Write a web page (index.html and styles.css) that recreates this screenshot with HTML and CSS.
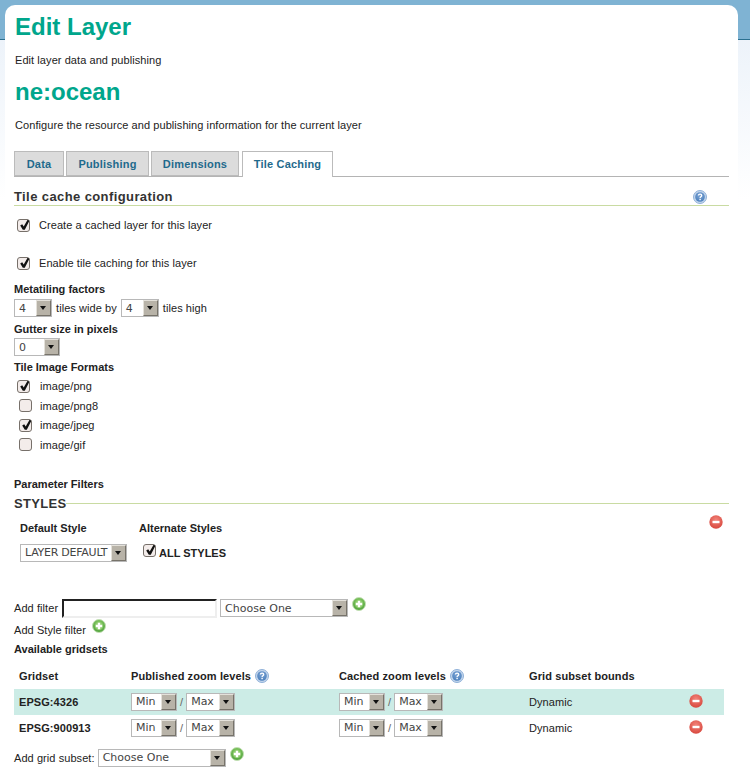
FILE: index.html
```html
<!DOCTYPE html>
<html>
<head>
<meta charset="utf-8">
<title>Edit Layer</title>
<link rel="stylesheet" href="styles.css">
</head>
<body>
<svg class="defs" width="0" height="0">
  <defs>
    <radialGradient id="gh" cx="50%" cy="35%" r="65%"><stop offset="0" stop-color="#7fa6d6"/><stop offset="1" stop-color="#4a7fbc"/></radialGradient>
    <radialGradient id="gp" cx="50%" cy="35%" r="65%"><stop offset="0" stop-color="#8fd06a"/><stop offset="1" stop-color="#4ea23c"/></radialGradient>
    <radialGradient id="gm" cx="50%" cy="35%" r="65%"><stop offset="0" stop-color="#f2847a"/><stop offset="1" stop-color="#d8483e"/></radialGradient>
    <symbol id="help" viewBox="0 0 14 14"><circle cx="7" cy="7" r="6.5" fill="#c4d6ec" stroke="#8fb0d8"/><circle cx="7" cy="7" r="4.8" fill="url(#gh)"/><path d="M5.4 5.6c0-1 .8-1.5 1.7-1.5s1.6.6 1.6 1.4c0 1.2-1.6 1.2-1.6 2.4" fill="none" stroke="#fff" stroke-width="1.3"/><rect x="6.4" y="8.8" width="1.4" height="1.4" fill="#fff"/></symbol>
    <symbol id="plus" viewBox="0 0 14 14"><circle cx="7" cy="7" r="6.5" fill="url(#gp)" stroke="#c3dfb4"/><circle cx="7" cy="7" r="4" fill="#8ccb6c"/><path d="M3.8 5.8h2V3.8h2.4v2h2v2.4h-2v2H5.8v-2h-2z" fill="#fff"/></symbol>
    <symbol id="minus" viewBox="0 0 14 14"><circle cx="7" cy="7" r="6.7" fill="url(#gm)"/><rect x="3.5" y="5.8" width="7" height="2.4" fill="#fff"/></symbol>
    <symbol id="check" viewBox="0 0 13 13"><path d="M2.2 6.4l2-1.2 1.5 2.4L9.6 .8l1.8 1-4.6 9h-2z" fill="#111"/></symbol>
  </defs>
</svg>
<div class="band"></div>
<main class="card">
  <h1 class="title">Edit Layer</h1>
  <p class="desc first">Edit layer data and publishing</p>
  <h2 class="title sub">ne:ocean</h2>
  <p class="desc second">Configure the resource and publishing information for the current layer</p>

  <nav class="tabs">
    <a class="tab t1">Data</a>
    <a class="tab t2">Publishing</a>
    <a class="tab t3">Dimensions</a>
    <a class="tab active">Tile Caching</a>
  </nav>

  <div class="section-head">
    <h3>Tile cache configuration</h3>
    <svg class="ico help-main"><use href="#help"/></svg>
  </div>

  <label class="check-row r1"><span class="cb on"><svg><use href="#check"/></svg></span>Create a cached layer for this layer</label>
  <label class="check-row r2"><span class="cb on"><svg><use href="#check"/></svg></span>Enable tile caching for this layer</label>

  <div class="label l-meta">Metatiling factors</div>
  <div class="inline meta">
    <span class="sel w38"><span class="val dj">4</span><i></i></span><span>tiles wide by</span>
    <span class="sel w38"><span class="val dj">4</span><i></i></span><span>tiles high</span>
  </div>
  <div class="label l-gut">Gutter size in pixels</div>
  <div class="inline gut"><span class="sel w45"><span class="val dj">0</span><i></i></span></div>
  <div class="label l-fmt">Tile Image Formats</div>
  <ul class="formats">
    <li><span class="cb on"><svg><use href="#check"/></svg></span>image/png</li>
    <li class="ind"><span class="cb"></span>image/png8</li>
    <li class="ind"><span class="cb on"><svg><use href="#check"/></svg></span>image/jpeg</li>
    <li class="ind"><span class="cb"></span>image/gif</li>
  </ul>

  <div class="label l-param">Parameter Filters</div>
  <div class="legend"><span>STYLES</span></div>
  <div class="styles">
    <div class="col c1">
      <div class="label">Default Style</div>
      <span class="sel w107"><span class="val dj tight">LAYER DEFAULT</span><i></i></span>
    </div>
    <div class="col c2">
      <div class="label">Alternate Styles</div>
      <div class="all"><span class="cb on"><svg><use href="#check"/></svg></span><b>ALL STYLES</b></div>
    </div>
    <svg class="ico rm-style"><use href="#minus"/></svg>
  </div>

  <div class="inline add-filter">
    <span>Add filter</span>
    <input class="txt" type="text">
    <span class="sel w128"><span class="val dj">Choose One</span><i></i></span>
    <svg class="ico up"><use href="#plus"/></svg>
  </div>
  <div class="inline add-style"><span>Add Style filter</span><svg class="ico up"><use href="#plus"/></svg></div>

  <div class="label l-grid">Available gridsets</div>
  <table class="grid">
    <thead>
      <tr>
        <th class="g1">Gridset</th>
        <th class="g2">Published zoom levels <svg class="ico"><use href="#help"/></svg></th>
        <th class="g3">Cached zoom levels <svg class="ico"><use href="#help"/></svg></th>
        <th class="g4">Grid subset bounds</th>
        <th class="g5"></th>
      </tr>
    </thead>
    <tbody>
      <tr class="odd">
        <td class="name">EPSG:4326</td>
        <td><div class="zoom"><span class="sel w46"><span class="val dj">Min</span><i></i></span><em>/</em><span class="sel w49"><span class="val dj">Max</span><i></i></span></div></td>
        <td><div class="zoom"><span class="sel w46"><span class="val dj">Min</span><i></i></span><em>/</em><span class="sel w49"><span class="val dj">Max</span><i></i></span></div></td>
        <td>Dynamic</td>
        <td><svg class="ico"><use href="#minus"/></svg></td>
      </tr>
      <tr>
        <td class="name">EPSG:900913</td>
        <td><div class="zoom"><span class="sel w46"><span class="val dj">Min</span><i></i></span><em>/</em><span class="sel w49"><span class="val dj">Max</span><i></i></span></div></td>
        <td><div class="zoom"><span class="sel w46"><span class="val dj">Min</span><i></i></span><em>/</em><span class="sel w49"><span class="val dj">Max</span><i></i></span></div></td>
        <td>Dynamic</td>
        <td><svg class="ico"><use href="#minus"/></svg></td>
      </tr>
    </tbody>
  </table>
  <div class="inline add-grid">
    <span>Add grid subset:</span>
    <span class="sel w128"><span class="val dj">Choose One</span><i></i></span>
    <svg class="ico up"><use href="#plus"/></svg>
  </div>
</main>
</body>
</html>
```

FILE: styles.css
```css
* { box-sizing: border-box; }
html, body { margin: 0; padding: 0; }
body {
  height: 770px;
  overflow: hidden;
  position: relative;
  background: linear-gradient(#edf3fa 40px, #ffffff 200px);
  font-family: "Liberation Sans", Arial, sans-serif;
  font-size: 11px;
  letter-spacing: .07px;
  color: #222;
}
.defs { position: absolute; }
.band {
  position: absolute;
  left: 0; right: 0; top: 0;
  height: 40px;
  background: #7fb3d3;
  border-bottom: 1px solid #2a6f8f;
}
.card {
  position: relative;
  margin: 5px 12px 0 5px;
  height: 765px;
  padding: 0 9px;
  background: #fff;
  border-radius: 10px 10px 0 0;
}
.title {
  margin: 0;
  font-size: 24px;
  line-height: 28px;
  font-weight: bold;
  letter-spacing: 0;
  color: #00a68c;
  padding-left: 1px;
}
h1.title { padding-top: 8px; }
.sub { margin-top: 11px; }
.desc { margin: 0; line-height: 13px; padding-left: 1px; }
.first { margin-top: 13px; }
.second { margin-top: 13px; }

.tabs { display: flex; margin-top: 19px; height: 26px; border-bottom: 1px solid #b4b4b4; }
.tab {
  height: 25px;
  border: 1px solid #bbb;
  background: #dcdcdc;
  color: #1f6a8c;
  font-weight: bold;
  font-size: 11px;
  line-height: 25px;
  text-align: center;
  letter-spacing: .2px;
}
.t1 { width: 50px; margin-right: 2px; }
.t2 { width: 83px; margin-right: 2px; }
.t3 { width: 88px; margin-right: 3px; }
.active { width: 91px; height: 26px; background: #fff; border-bottom: 0; }

.section-head {
  display: flex;
  justify-content: space-between;
  align-items: center;
  margin-top: 12px;
  height: 17px;
  border-bottom: 1px solid #c9dba2;
  padding-right: 22px;
}
.section-head h3 { margin: 0; font-size: 13px; line-height: 16px; letter-spacing: .4px; color: #333; }

.ico { width: 14px; height: 14px; flex: none; display: inline-block; }
.cb {
  width: 13px; height: 13px; flex: none;
  border: 1px solid #77706a;
  border-radius: 3px;
  background: #f3ecea;
  display: inline-block;
}
.cb svg { display: block; width: 13px; height: 13px; margin: -1px 0 0 0; }
.check-row { display: flex; align-items: center; height: 14px; padding-left: 3px; }
.check-row .cb { margin-right: 9px; }
.r1 { margin-top: 12px; }
.r2 { margin-top: 24px; }

.label { font-weight: bold; line-height: 13px; letter-spacing: 0; }
.l-meta { margin-top: 13px; }
.inline { display: flex; align-items: center; gap: 3px; }
.meta { margin-top: 3px; height: 18px; gap: 4px; }
.l-gut { margin-top: 6px; }
.gut { margin-top: 2px; height: 18px; }
.l-fmt { margin-top: 5px; }
.formats { list-style: none; margin: 5px 0 0; padding: 0 0 0 3px; }
.formats li { display: flex; align-items: center; height: 14px; margin-bottom: 5.6px; }
.formats .cb { margin-right: 10px; }
.formats .ind { padding-left: 2px; }
.formats .ind .cb { margin-right: 8px; }
.l-param { margin-top: 26px; }

.sel {
  display: inline-flex;
  align-items: center;
  justify-content: space-between;
  height: 18px;
  border: 1px solid #b8b8b8;
  background: #fff;
  flex: none;
}
.val { padding-left: 4px; white-space: nowrap; }
.dj { font-family: "DejaVu Sans", Verdana, sans-serif; font-size: 11px; letter-spacing: 0; color: #444; }
.tight { letter-spacing: -.25px; }
.sel i {
  position: relative;
  flex: none;
  width: 15px;
  height: 16px;
  background: #b8b3a8;
  border: 1px solid;
  border-color: #e4e1da #77736a #77736a #e4e1da;
}
.sel i::after {
  content: "";
  position: absolute;
  left: 3px; top: 5px;
  border: 3px solid transparent;
  border-top: 4px solid #111;
  border-bottom: 0;
}
.w38 { width: 38px; }
.w45 { width: 46px; }
.w107 { width: 107px; }
.w128 { width: 128px; }
.w46 { width: 46px; }
.w49 { width: 49px; }

.legend { display: flex; align-items: center; margin-top: 4px; height: 17px; }
.legend span { font-size: 13px; font-weight: bold; letter-spacing: .3px; color: #333; }
.legend::after { content: ""; flex: 1; height: 1px; background: #c9dba2; }

.styles { position: relative; display: flex; height: 87px; padding: 10px 0 0 6px; }
.c1 { width: 119px; }
.c1 .sel { margin-top: 9px; }
.all { display: flex; align-items: flex-end; margin: 9px 0 0 4px; }
.all .cb { margin-right: 3px; }
.all b { font-size: 11px; letter-spacing: 0; margin-bottom: -2px; }
.rm-style { position: absolute; right: 6px; top: 3px; }

.txt { width: 155px; height: 19px; margin: 0 0 0 1px; padding: 0; border: 2px inset #e8e8e0; border-color: #777 #eee #eee #777; background: #fff; }
.up { margin: -8px 0 0 1px; }
.add-filter { height: 19px; }
.add-style { margin-top: 3px; height: 18px; }
.add-style .up { margin-left: 3px; }
.l-grid { margin-top: 4px; }

.grid { border-collapse: collapse; table-layout: fixed; width: 710px; margin-top: 7px; }
.grid th { font-weight: bold; text-align: left; height: 26px; padding: 0 0 0 5px; white-space: nowrap; letter-spacing: .1px; }
.grid th .ico { vertical-align: -3px; margin-left: 1px; }
.grid td { height: 26px; padding: 0 0 0 5px; }
.g1 { width: 112px; }
.g2 { width: 208px; }
.g3 { width: 190px; }
.g4 { width: 160px; }
.g5 { width: 40px; }
.odd { background: #ccece6; }
.name { font-weight: bold; }
.zoom { display: flex; align-items: center; gap: 3px; }
.zoom em { font-style: normal; color: #666; }
.zoom .sel { height: 18px; }
.add-grid { margin-top: 8px; height: 18px; }
```
